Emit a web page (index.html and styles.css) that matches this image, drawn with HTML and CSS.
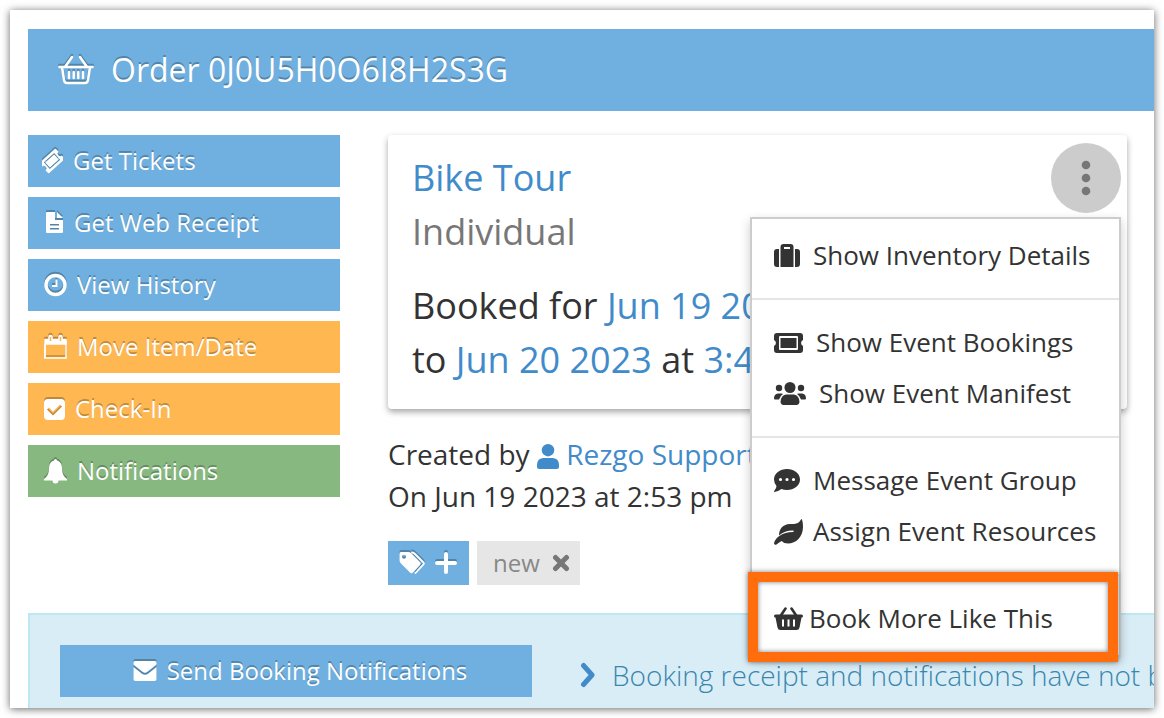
FILE: index.html
```html
<!DOCTYPE html>
<html lang="en">
<head>
  <meta charset="UTF-8" />
  <meta name="viewport" content="width=device-width, initial-scale=1" />
  <title>Order 0J0U5H0O6I8H2S3G</title>
  <link rel="stylesheet" href="styles.css">
</head>
<body>

  <div class="page">
    <header class="order-header">
      <svg class="icon" width="36" height="30" viewBox="0 0 36 30" fill="none" stroke="currentColor" stroke-width="2.500" stroke-linecap="round" stroke-linejoin="round">
        <path d="M1.500 12h33M14 2L7 12M22 2l7 10M4 12l2 13q.5 3 3 3h18q2.500 0 3-3l2-13M11 17v6M15.700 17v6M20.300 17v6M25 17v6" />
      </svg>
      <h1>Order 0J0U5H0O6I8H2S3G</h1>
    </header>

    <div class="content">
      <nav class="actions">
        <button type="button" class="btn">
          <svg class="icon" width="21" height="26" viewBox="0 0 21 26">
            <g transform="translate(10 13) rotate(-42)">
              <path fill="currentColor" fill-rule="evenodd" d="M-10-7H10Q11-7 11-6V-2.500A2.500 2.500 0 0 0 11 2.500V6Q11 7 10 7H-10Q-11 7-11 6V2.500A2.500 2.500 0 0 0-11-2.500V-6Q-11-7-10-7ZM-7-4.500V4.500H7V-4.500ZM-6-3.500H6V3.500H-6Z" />
            </g>
          </svg>
          <span>Get Tickets</span>
        </button>
        <button type="button" class="btn">
          <svg class="icon" width="22" height="26" viewBox="0 0 22 26">
            <path fill="currentColor" fill-rule="evenodd" d="M5 2H13V10H21V22Q21 23 20 23H5Q4 23 4 22V3Q4 2 5 2ZM15 2L21 8H15ZM8 14V15.500H17V14ZM8 18V19.500H17V18Z" />
          </svg>
          <span>Get Web Receipt</span>
        </button>
        <button type="button" class="btn">
          <svg class="icon" width="25" height="26" viewBox="0 0 25 26" fill="none" stroke="currentColor">
            <circle cx="13.500" cy="13" r="9.500" stroke-width="3.400" />
            <path d="M14.500 7.500V14H10" stroke-width="2" />
          </svg>
          <span>View History</span>
        </button>
        <button type="button" class="btn btn-warning">
          <svg class="icon" width="25" height="26" viewBox="0 0 25 26" fill="none" stroke="currentColor">
            <path d="M3 10V24H24V7" stroke-width="1.500" />
            <path d="M3 24V5.500H24V10H3" stroke-width="1.500" stroke-linejoin="round" />
            <path d="M3 8H24" stroke-width="4" />
            <path d="M8.500 3V7M18.500 3V7" stroke-width="4.500" stroke-linecap="round" />
            <path class="calendar-slot" d="M8.500 3V7M18.500 3V7" stroke-width="1.500" />
          </svg>
          <span>Move Item/Date</span>
        </button>
        <button type="button" class="btn btn-warning">
          <svg class="icon" width="23" height="26" viewBox="0 0 23 26">
            <path fill="currentColor" fill-rule="evenodd" d="M6 3H19Q23 3 23 7V20Q23 24 19 24H6Q2 24 2 20V7Q2 3 6 3ZM5 13.500L11 19.500L20 10.500L18 8.500L11 15.500L7 11.500Z" />
          </svg>
          <span>Check-In</span>
        </button>
        <button type="button" class="btn btn-success">
          <svg class="icon" width="25" height="26" viewBox="0 0 25 26">
            <path fill="currentColor" d="M12 2.500A1.500 1.500 0 0 1 15 2.500Q20 4 20 10Q20 18 25 21V22.500H16.500A3 3 0 0 1 10.500 22.500H2V21Q7 18 7 10Q7 4 12 2.500Z" />
          </svg>
          <span>Notifications</span>
        </button>
      </nav>

      <main>
        <section class="booking-card">
          <h2><a href="#">Bike Tour</a></h2>
          <p class="muted">Individual</p>
          <p class="dates">
            Booked for <a href="#">Jun 19 2023</a><br>
            to <a href="#">Jun 20 2023</a> at <a href="#">3:45 pm</a>
          </p>

          <button type="button" class="menu-toggle" aria-label="Item menu">
            <svg width="10" height="36" viewBox="0 0 10 36" fill="currentColor">
              <circle cx="5" cy="5" r="4.300" />
              <circle cx="5" cy="18" r="4.300" />
              <circle cx="5" cy="31" r="4.300" />
            </svg>
          </button>

          <ul class="menu">
            <li>
              <a href="#">
                <svg width="26" height="23" viewBox="0 0 26 23" fill="currentColor">
                  <path d="M5 5V23H3Q0 23 0 20V8Q0 5 3 5ZM21 5V23H23Q26 23 26 20V8Q26 5 23 5Z" />
                  <path fill-rule="evenodd" d="M6.500 23V3Q6.500 0 9.500 0H16.500Q19.500 0 19.500 3V23ZM10 3V5H16V3Z" />
                </svg>
                <span>Show Inventory Details</span>
              </a>
            </li>
            <li class="divider"></li>
            <li>
              <a href="#">
                <svg width="29" height="20" viewBox="0 0 29 20">
                  <path fill="currentColor" fill-rule="evenodd" d="M3 0H26Q29 0 29 3V7A3.300 3.300 0 0 0 29 13V17Q29 20 26 20H3Q0 20 0 17V13A3.300 3.300 0 0 0 0 7V3Q0 0 3 0ZM6 3Q5 3 5 4V16Q5 17 6 17H23Q24 17 24 16V4Q24 3 23 3ZM6.500 5H22.500V15H6.500Z" />
                </svg>
                <span>Show Event Bookings</span>
              </a>
            </li>
            <li>
              <a href="#">
                <svg width="32" height="23" viewBox="0 0 32 23" fill="currentColor">
                  <circle cx="16" cy="5.500" r="5.500" />
                  <circle cx="5" cy="6" r="3.200" />
                  <circle cx="27" cy="6" r="3.200" />
                  <path d="M12 12.500H20Q25 13 25.500 20Q25 23 22.500 23H9.500Q7 23 6.500 20Q7 13 12 12.500ZM4 11.500H7.500L9 12Q6 14 5 17.500H1Q0 17.500 0 16.500Q0 12 4 11.500ZM28 11.500H24.500L23 12Q26 14 27 17.500H31Q32 17.500 32 16.500Q32 12 28 11.500Z" />
                </svg>
                <span>Show Event Manifest</span>
              </a>
            </li>
            <li class="divider"></li>
            <li>
              <a href="#">
                <svg width="26" height="23" viewBox="0 0 26 23">
                  <path fill="currentColor" fill-rule="evenodd" d="M13 0C20 0 26 4.500 26 10.500C26 16.500 20 21 13 21Q10 21 7.500 20Q4 22.500 .5 23Q-.5 22.500 .5 21.500Q2.500 19 2.500 17Q0 14 0 10.500C0 4.500 6 0 13 0ZM6.500 8.900A1.600 1.600 0 1 0 6.500 12.100A1.600 1.600 0 1 0 6.500 8.900ZM13 8.900A1.600 1.600 0 1 0 13 12.100A1.600 1.600 0 1 0 13 8.900ZM19.500 8.900A1.600 1.600 0 1 0 19.500 12.100A1.600 1.600 0 1 0 19.500 8.900Z" />
                </svg>
                <span>Message Event Group</span>
              </a>
            </li>
            <li>
              <a href="#" class="snug">
                <svg width="29" height="26" viewBox="0 0 29 26">
                  <path fill="currentColor" d="M27 .500Q27.500-.3 28 .600Q29 3.500 29 8C29 18 22 24.500 14 24.500Q10 24.500 7.500 22Q4 24 2.500 25.500Q0 26.500 0 24C2 18 8 13.500 19 13Q20.500 12.200 19 11.500Q11 11.300 5 16.500C5 10 9 5 16 5H20Q25 4.500 27 .500Z" />
                </svg>
                <span>Assign Event Resources</span>
              </a>
            </li>
            <li class="divider"></li>
            <li class="highlight">
              <a href="#">
                <svg width="29" height="23" viewBox="0 0 29 23">
                  <path fill="none" stroke="currentColor" stroke-width="2.600" stroke-linecap="round" d="M11.500 1.500L6.500 9M17.500 1.500L22.500 9" />
                  <path fill="currentColor" fill-rule="evenodd" d="M1.500 7.500H27.500Q29 7.500 29 9Q29 10.500 27.500 10.500L25.500 20.500Q25 23 22.500 23H6.500Q4 23 3.500 20.500L1.500 10.500Q0 10.500 0 9Q0 7.500 1.500 7.500ZM8 12.500V19.500H10V12.500ZM13.500 12.500V19.500H15.500V12.500ZM19 12.500V19.500H21V12.500Z" />
                </svg>
                <span>Book More Like This</span>
              </a>
            </li>
          </ul>
        </section>

        <div class="created">
          <p>Created by
            <a href="#"><svg width="22" height="25" viewBox="0 0 22 25" fill="currentColor"><circle cx="11" cy="6.200" r="6.200" /><path d="M6 14H16Q22 14.500 22 21V22.500Q22 25 19.500 25H2.500Q0 25 0 22.500V21Q0 14.500 6 14Z" /></svg> Rezgo Support</a>
          </p>
          <p>On Jun 19 2023 at 2:53 pm</p>
        </div>

        <div class="tags">
          <button type="button" class="tag-add" aria-label="Add tag">
            <svg class="icon" width="26" height="24" viewBox="0 0 26 24">
              <path fill="currentColor" fill-rule="evenodd" d="M2 1H9Q11 1 12 2L21 11Q22.500 12.500 21 14L14 21.500Q12.500 23 11 21.500L2 12.500Q.5 11 .5 9V3Q.5 1 2 1ZM5 3.700A2 2 0 1 0 5 7.700A2 2 0 1 0 5 3.700Z" />
              <path fill="none" stroke="currentColor" stroke-width="1.800" stroke-linecap="round" d="M13 1.500Q14.500 1.500 16 3L24 11Q25.500 12.500 24 14L16.500 22" />
            </svg>
            <svg class="icon" width="22" height="24" viewBox="0 0 22 24">
              <path fill="none" stroke="currentColor" stroke-width="4" stroke-linecap="round" d="M11 3V21M2 12H20" />
            </svg>
          </button>
          <span class="tag">
            new
            <button type="button" aria-label="Remove tag">
              <svg width="18" height="18" viewBox="0 0 18 18">
                <path fill="none" stroke="currentColor" stroke-width="5" stroke-linecap="round" d="M3.500 3.500L14.500 14.500M14.500 3.500L3.500 14.500" />
              </svg>
            </button>
          </span>
        </div>
      </main>
    </div>

    <section class="notice">
      <button type="button" class="btn">
        <svg class="icon" width="24" height="22" viewBox="0 0 24 22">
          <path fill="currentColor" d="M2 1H22Q23.500 1 23.500 2.500V4.500L14 12Q12 13.500 10 12L.5 4.500V2.500Q.5 1 2 1ZM.5 7L9 13.700Q12 16 15 13.700L23.500 7V19Q23.500 21 21.500 21H2.500Q.5 21 .5 19Z" />
        </svg>
        <span>Send Booking Notifications</span>
      </button>
      <p>
        <svg width="16" height="26" viewBox="0 0 16 26">
          <path fill="none" stroke="currentColor" stroke-width="5" stroke-linecap="round" stroke-linejoin="round" d="M3.500 3.500L12 13L3.500 22.500" />
        </svg>
        <span>Booking receipt and notifications have not been sent</span>
      </p>
    </section>
  </div>

</body>
</html>
```

FILE: styles.css
```css
* {
  box-sizing: border-box;
}

body {
  margin: 0;
  padding: 10px;
  background: #fff;
  color: #333;
  font-family: "Open Sans", "Noto Sans", sans-serif;
  font-size: 28px;
  line-height: 42px;
}

h1, h2, p, ul {
  margin: 0;
  padding: 0;
  font-weight: 400;
}

a {
  color: #428bca;
  text-decoration: none;
}

button {
  border: 0;
  padding: 0;
  font: inherit;
  cursor: pointer;
}

svg {
  flex: none;
}

.page {
  height: calc(100vh - 20px);
  padding: 19px 0 0 18px;
  background: #fff;
  box-shadow: 0 1px 8px rgba(0, 0, 0, 0.6);
  overflow: hidden;
}

.icon {
  filter: drop-shadow(0 -2px 0 rgba(0, 0, 0, 0.25));
}

.order-header {
  display: flex;
  align-items: center;
  gap: 17px;
  padding: 20px 30px;
  background: #6fb0e0;
  color: #fff;
}

.order-header h1 {
  font-size: 32px;
  text-shadow: 0 -2px 0 rgba(0, 0, 0, 0.25);
}

.content {
  display: grid;
  grid-template-columns: 312px 1fr;
  gap: 48px;
  padding: 24px 27px 28px 0;
}

.actions {
  display: flex;
  flex-direction: column;
  gap: 10px;
}

.btn {
  display: flex;
  align-items: center;
  gap: 10px;
  height: 52px;
  padding: 0 14px;
  background: #6fb0e0;
  color: #fff;
  font-size: 24px;
  line-height: 36px;
  text-shadow: 0 -2px 0 rgba(0, 0, 0, 0.25);
}

.btn-warning {
  background: #ffb752;
}

.btn-success {
  background: #87b87f;
}

.calendar-slot {
  stroke: #ffb752;
}

.booking-card {
  position: relative;
  padding: 16px 24px 22px;
  border-radius: 4px;
  background: #fff;
  box-shadow: 0 3px 6px rgba(0, 0, 0, 0.35);
  font-size: 36px;
  line-height: 54px;
  white-space: nowrap;
}

.booking-card h2 {
  font-size: 36px;
}

.muted {
  color: #777;
}

.dates {
  margin-top: 20px;
}

.menu-toggle {
  position: absolute;
  top: 8px;
  right: 6px;
  display: flex;
  align-items: center;
  justify-content: center;
  width: 70px;
  height: 70px;
  border-radius: 50%;
  background: #ccc;
  color: #777;
}

.menu {
  position: absolute;
  top: 82px;
  right: 6px;
  z-index: 10;
  width: 371px;
  padding: 11px 0;
  border: 2px solid #ccc;
  background: #fff;
  box-shadow: 0 4px 10px rgba(0, 0, 0, 0.2);
  font-size: 26px;
  line-height: 51px;
  list-style: none;
}

.menu a {
  display: flex;
  align-items: center;
  gap: 13px;
  padding-left: 22px;
  color: #333;
}

.menu .snug {
  gap: 10px;
}

.divider {
  height: 2px;
  margin: 17px 0;
  background: #e5e5e5;
}

.highlight {
  position: relative;
}

.menu .highlight a {
  gap: 6px;
}

/* orange frame round the last entry */
.highlight::after {
  content: "";
  position: absolute;
  inset: -21px 1px -18px -4px;
  border: 10px solid #ff6d0c;
  box-shadow: 0 0 5px rgba(0, 0, 0, 0.5), inset 0 0 5px rgba(0, 0, 0, 0.5);
  pointer-events: none;
}

.created {
  margin-top: 24px;
  white-space: nowrap;
}

.created svg {
  vertical-align: -4px;
}

.tags {
  display: flex;
  gap: 8px;
  margin-top: 24px;
}

.tag-add {
  display: flex;
  align-items: center;
  gap: 10px;
  height: 44px;
  padding: 0 12px 0 11px;
  background: #6fb0e0;
  color: #fff;
}

.tag {
  display: flex;
  align-items: center;
  gap: 12px;
  height: 44px;
  padding: 0 10px 0 16px;
  background: #e6e6e6;
  color: #888;
  font-size: 24px;
}

.tag button {
  display: flex;
  background: none;
  color: #777;
}

.notice {
  display: flex;
  gap: 48px;
  padding: 30px;
  border: 2px solid #bce8f1;
  border-right: 0;
  background: #d9edf7;
  white-space: nowrap;
}

.notice .btn {
  flex: none;
  justify-content: center;
  width: 472px;
  padding: 0 10px 0 18px;
}

.notice p {
  display: flex;
  align-items: center;
  gap: 16px;
  margin-top: 7px;
  color: #3a87ad;
  font-weight: 300;
}

.notice p svg {
  color: #428bca;
}
```
